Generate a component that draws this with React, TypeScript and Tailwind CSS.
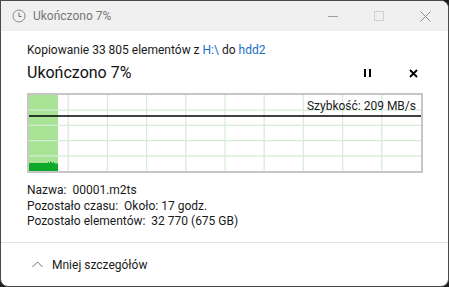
import React from "react";

const font = { fontFamily: '"Segoe UI", Roboto, "Noto Sans", sans-serif' };

const TitleBar = () => (
  <div className="flex items-center h-[30px] bg-[#f0f0f0] pl-[11px]">
    <svg width="14" height="14" viewBox="0 0 14 14" className="shrink-0">
      <circle cx="7" cy="7" r="6" fill="none" stroke="#8a8a8a" strokeWidth="1" />
      <path d="M7 3.5V7.5H9.5" fill="none" stroke="#6a6a6a" strokeWidth="1" />
    </svg>
    <span className="ml-[7px] text-[12px] text-[#777777]">Ukończono 7%</span>
    <div className="ml-auto flex items-center h-full">
      <div className="w-[46px] h-full flex items-center justify-center">
        <div className="w-[10px] h-px bg-[#a0a0a0]" />
      </div>
      <div className="w-[46px] h-full flex items-center justify-center">
        <div className="w-[10px] h-[10px] border border-[#d0d0d0]" />
      </div>
      <div className="w-[46px] h-full flex items-center justify-center">
        <svg width="11" height="11" viewBox="0 0 11 11">
          <path d="M0.5 0.5L10.5 10.5M10.5 0.5L0.5 10.5" stroke="#8a8a8a" strokeWidth="1" />
        </svg>
      </div>
    </div>
  </div>
);

const SpeedChart = () => {
  const cols = [1, 2, 3, 4, 5, 6, 7, 8, 9];
  const rows = [1, 2, 3, 4];
  return (
    <div className="relative mt-[8px] w-[396px] h-[80px] border-2 border-[#c6c6c6]">
      <svg width="392" height="76" viewBox="0 0 392 76" className="block">
        <rect x="0" y="0" width="29" height="76" fill="#a9e396" />
        {cols.map((c) => (
          <line key={c} x1={c * 39.2} y1="0" x2={c * 39.2} y2="76" stroke="#d5ecd6" strokeWidth="1.2" />
        ))}
        {rows.map((r) => (
          <line key={r} x1="0" y1={r * 15.2} x2="392" y2={r * 15.2} stroke="#d5ecd6" strokeWidth="1.2" />
        ))}
        <path
          d="M0 68H19V67H20V68H21V66.5H22V67H23V68H24V67H25V68H26V68.5H29V76H0Z"
          fill="#0ea82b"
        />
        <line x1="0" y1="21" x2="392" y2="21" stroke="#000" strokeWidth="1.5" />
      </svg>
      <span className="absolute right-[5px] top-[3px] text-[12px] leading-[16px] text-[#1a1a1a]">
        Szybkość: 209 MB/s
      </span>
    </div>
  );
};

export default function App() {
  return (
    <div className="w-[449px] h-[287px] bg-[#1e1e1e]" style={font}>
      <div className="w-full h-full border border-[#4a4a4a] rounded-tr-[8px] rounded-b-[8px] overflow-hidden bg-white flex flex-col">
        <TitleBar />
        <div className="pl-[26px] pt-[11px] flex flex-col">
          <div className="text-[12px] leading-[16px] text-[#1a1a1a]">
            Kopiowanie 33 805 elementów z <span className="text-[#1a6fc9]">H:\</span> do{" "}
            <span className="text-[#1a6fc9]">hdd2</span>
          </div>
          <div className="flex items-center h-[24px] mt-[3px]">
            <span className="text-[16px] text-[#111111]">Ukończono 7%</span>
            <div className="ml-auto flex items-center">
              <div className="w-[46px] flex justify-center ml-[-10px]">
                <div className="flex gap-[3px]">
                  <div className="w-[2px] h-[8px] bg-black" />
                  <div className="w-[2px] h-[8px] bg-black" />
                </div>
              </div>
              <div className="w-[46px] flex justify-center mr-[12px]">
                <svg width="9" height="9" viewBox="0 0 9 9">
                  <path d="M1 1L8 8M8 1L1 8" stroke="#000" strokeWidth="1.8" />
                </svg>
              </div>
            </div>
          </div>
          <SpeedChart />
          <div className="mt-[10px] text-[12px] leading-[15.5px] text-[#1a1a1a] flex flex-col">
            <span>Nazwa:&nbsp; 00001.m2ts</span>
            <span>Pozostało czasu:&nbsp; Około: 17 godz.</span>
            <span>Pozostało elementów:&nbsp; 32 770 (675 GB)</span>
          </div>
        </div>
        <div className="mt-auto border-t border-[#e3e3e3] h-[44px] flex items-center pl-[31px]">
          <svg width="11" height="7" viewBox="0 0 11 7">
            <path d="M0.5 6L5.5 1L10.5 6" fill="none" stroke="#6e6e6e" strokeWidth="1" />
          </svg>
          <span className="ml-[9px] text-[12px] text-[#1a1a1a]">Mniej szczegółów</span>
        </div>
      </div>
    </div>
  );
}
